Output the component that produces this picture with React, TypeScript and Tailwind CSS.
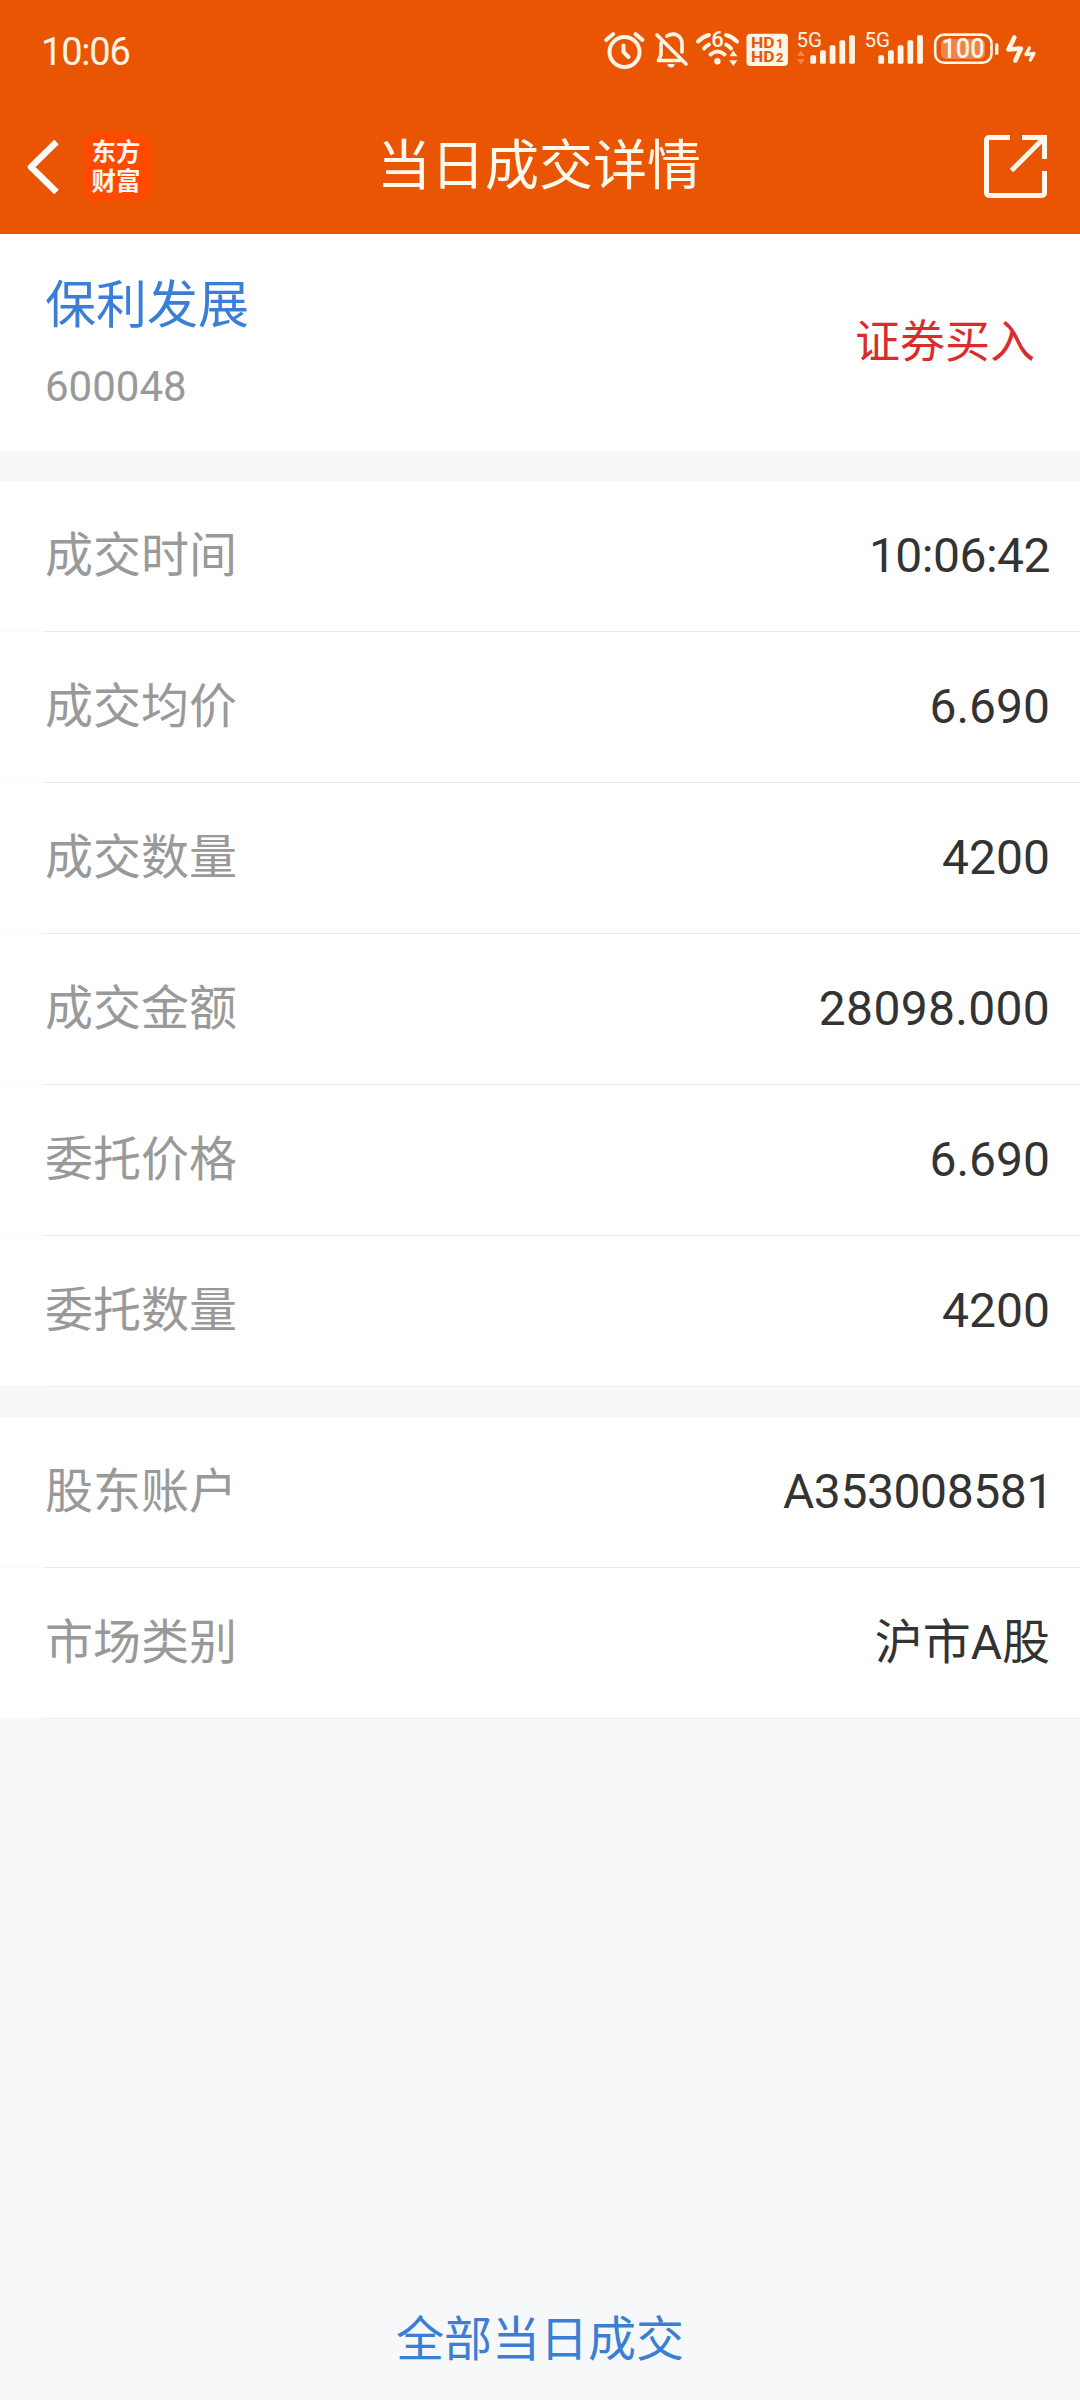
import clsx from "clsx";
import type { ReactNode } from "react";

interface Row {
	label: string;
	value: string;
	valueClass?: string;
}

const DEAL_ROWS: Row[] = [
	{ label: "成交时间", value: "10:06:42", valueClass: "tracking-[-0.5px]" },
	{ label: "成交均价", value: "6.690" },
	{ label: "成交数量", value: "4200" },
	{ label: "成交金额", value: "28098.000", valueClass: "tracking-[0.3px]" },
	{ label: "委托价格", value: "6.690" },
	{ label: "委托数量", value: "4200" },
];

const ACCOUNT_ROWS: Row[] = [
	{ label: "股东账户", value: "A353008581", valueClass: "tracking-[-0.4px] -mr-[3px]" },
	{ label: "市场类别", value: "沪市A股" },
];

const CREAM = "#fff5e6";
const ORANGE = "#ea5504";

function StatusIcon({ width, children }: { width: number; children: ReactNode }) {
	return (
		<svg
			width={width}
			height={56}
			viewBox={`0 -6 ${width} 56`}
			fill="none"
			stroke={CREAM}
			strokeWidth={4}
			strokeLinecap="round"
			strokeLinejoin="round"
			className="shrink-0"
		>
			{children}
		</svg>
	);
}

function Signal({ arrows = false }: { arrows?: boolean }) {
	return (
		<StatusIcon width={68}>
			<text
				x={2.5}
				y={18.8}
				fontSize={21}
				textLength={25.5}
				lengthAdjust="spacingAndGlyphs"
				fill={CREAM}
				stroke="none"
			>
				5G
			</text>
			{arrows && (
				<path
					d="M7 22.5l4 5.5H3zM7 36.5l4-5.5H3z"
					fill="#ff8348"
					stroke="none"
				/>
			)}
			{[0, 1, 2, 3, 4].map((i) => (
				<rect
					key={i}
					x={16.3 + i * 9.7}
					y={27.2 - i * 5}
					width={5.8}
					height={8.6 + i * 5}
					rx={1.5}
					fill={CREAM}
					stroke="none"
				/>
			))}
		</StatusIcon>
	);
}

function StatusBar() {
	return (
		<div className="flex h-[100px] items-center justify-between pl-[41px] pr-[38px]">
			<span className="pt-1 text-[38px] leading-none tracking-[-1.2px] text-[#fff5e6]">
				10:06
			</span>
			<div className="flex">
				{/* alarm */}
				<StatusIcon width={50}>
					<circle cx={24.5} cy={24} r={15} />
					<path d="M23.5 17.5V24l5 5M6.2 12l7-6M35.5 6l7 6" />
				</StatusIcon>
				{/* muted bell */}
				<StatusIcon width={42}>
					<path
						d="M7 7l29 29M11 15v12L8.5 32.5H30M17 8C25 3.5 32 8 32 16v8"
						strokeWidth={3.6}
					/>
					<path d="M17.5 36h7a3.5 3.5 0 0 1-7 0z" fill={CREAM} stroke="none" />
				</StatusIcon>
				{/* wifi 6 */}
				<StatusIcon width={52}>
					<path d="M6 13.5Q11 8.5 17 7M34 7Q40 8.5 45 13.5M12 20.5Q14 18 17 16.5M34 16.5Q37 18 39 20.5M18.5 26.5Q25.5 20.5 32.5 26.5" />
					<circle cx={25.4} cy={33.2} r={3.2} fill={CREAM} stroke="none" />
					<text
						x={25.4}
						y={18.8}
						fontSize={22}
						fontWeight={500}
						textAnchor="middle"
						fill={CREAM}
						stroke={ORANGE}
						paintOrder="stroke"
					>
						6
					</text>
					<path
						d="M41.3 22.5l4 5.8h-8zM41.3 38l4-5.8h-8z"
						fill={CREAM}
						stroke="none"
					/>
				</StatusIcon>
				{/* dual HD voice */}
				<StatusIcon width={50}>
					<rect x={2.5} y={5.8} width={41.5} height={32.2} rx={4} fill={CREAM} stroke="none" />
					<g fill={ORANGE} stroke="none" fontWeight={700}>
						<text x={7} y={19.8} fontSize={15} textLength={23.5} lengthAdjust="spacingAndGlyphs">
							HD
						</text>
						<text x={32} y={19.8} fontSize={13}>1</text>
						<text x={7} y={34} fontSize={15} textLength={23.5} lengthAdjust="spacingAndGlyphs">
							HD
						</text>
						<text x={32} y={34} fontSize={13}>2</text>
					</g>
				</StatusIcon>
				<Signal arrows />
				<Signal />
				{/* battery */}
				<StatusIcon width={72}>
					<rect x={5.2} y={6.6} width={56.3} height={28.2} rx={9} strokeWidth={2.6} />
					<rect x={11} y={11} width={44} height={20} rx={5} fill="#f1824c" stroke="none" />
					<text
						x={11.5}
						y={30.2}
						fontSize={27}
						fontWeight={500}
						textLength={43}
						lengthAdjust="spacingAndGlyphs"
						fill={CREAM}
						stroke="none"
					>
						100
					</text>
					<rect x={65} y={15.3} width={3.4} height={11.5} rx={1.5} fill={CREAM} stroke="none" />
				</StatusIcon>
				{/* charging */}
				<StatusIcon width={40}>
					<path d="M12.3 9.5L6.5 21.5l12.5-1L13.3 32.5" strokeWidth={4.6} />
					<path d="M27.3 20L24 26.5l8-1L28.3 32" strokeWidth={3.4} />
				</StatusIcon>
			</div>
		</div>
	);
}

function NavBar() {
	return (
		<div className="grid h-[134px] grid-cols-[1fr_auto_1fr] items-center pl-[27px] pr-[33px]">
			<div className="flex items-center">
				<svg
					width={33}
					height={56}
					viewBox="0 0 33 56"
					fill="none"
					stroke="#ffffff"
					strokeWidth={6.5}
					strokeLinejoin="round"
				>
					<path d="M29.5 3L4 28l25.5 25" />
				</svg>
				<div className="ml-[23px] flex size-[68px] flex-col items-center justify-center rounded-[14px] bg-[#ff4a00] pb-px text-[24.5px] font-bold leading-[29px] text-[#fff5f0]">
					<span className="-ml-0.5">东方</span>
					<span className="-ml-0.5">财富</span>
				</div>
			</div>
			<h1 className="ml-1 text-[54px] leading-none text-[#fff8ec]">当日成交详情</h1>
			<svg
				width={63}
				height={63}
				viewBox="0 0 63 63"
				fill="none"
				stroke="#fff8ec"
				strokeWidth={5}
				className="mb-0.5 justify-self-end"
			>
				<path d="M26 2.5H5A2.5 2.5 0 0 0 2.5 5v53A2.5 2.5 0 0 0 5 60.5h53a2.5 2.5 0 0 0 2.5-2.5V36" />
				<path d="M38 2.5h22.5V24M60 3L27.5 35.5" />
			</svg>
		</div>
	);
}

function RowList({ rows }: { rows: Row[] }) {
	return (
		<div className="bg-white">
			{rows.map((row, i) => (
				<div key={row.label}>
					<div className="flex h-[150px] items-center justify-between pl-[45px] pr-[30px] text-[48px] leading-none">
						<span className="text-[#999999]">{row.label}</span>
						<span className={clsx("text-[#333333]", row.valueClass)}>
							{row.value}
						</span>
					</div>
					{/* divider, inset on the left */}
					<div
						className={clsx(
							"h-px pl-[45px]",
							i === rows.length - 1 ? "bg-[#f6f7f9]" : "bg-[#fafafa]",
						)}
					>
						<div className="h-px bg-[#ebebeb]" />
					</div>
				</div>
			))}
		</div>
	);
}

export default function App() {
	return (
		<div className="flex h-[2400px] w-[1080px] flex-col bg-[#f6f8fa] font-[Roboto,'Noto_Sans_CJK_SC',sans-serif] font-[370]">
			<header className="bg-[#ea5504]">
				<StatusBar />
				<NavBar />
			</header>

			<section className="flex h-[217px] items-center justify-between bg-white pl-[45px] pr-[45px]">
				<div className="flex flex-col pt-0.5">
					<span className="text-[51px] leading-[60px] text-[#3a7fd5]">保利发展</span>
					<span className="mt-[26px] text-[42px] leading-[50px] text-[#999999]">
						600048
					</span>
				</div>
				<span className="text-[45px] leading-none text-[#db2c2c]">证券买入</span>
			</section>

			<main className="mt-[30px] flex flex-col gap-[30px]">
				<RowList rows={DEAL_ROWS} />
				<RowList rows={ACCOUNT_ROWS} />
			</main>

			<button
				type="button"
				className="mx-auto mb-8 mt-auto text-[48px] leading-[56px] text-[#3a7fd5]"
			>
				全部当日成交
			</button>
		</div>
	);
}
